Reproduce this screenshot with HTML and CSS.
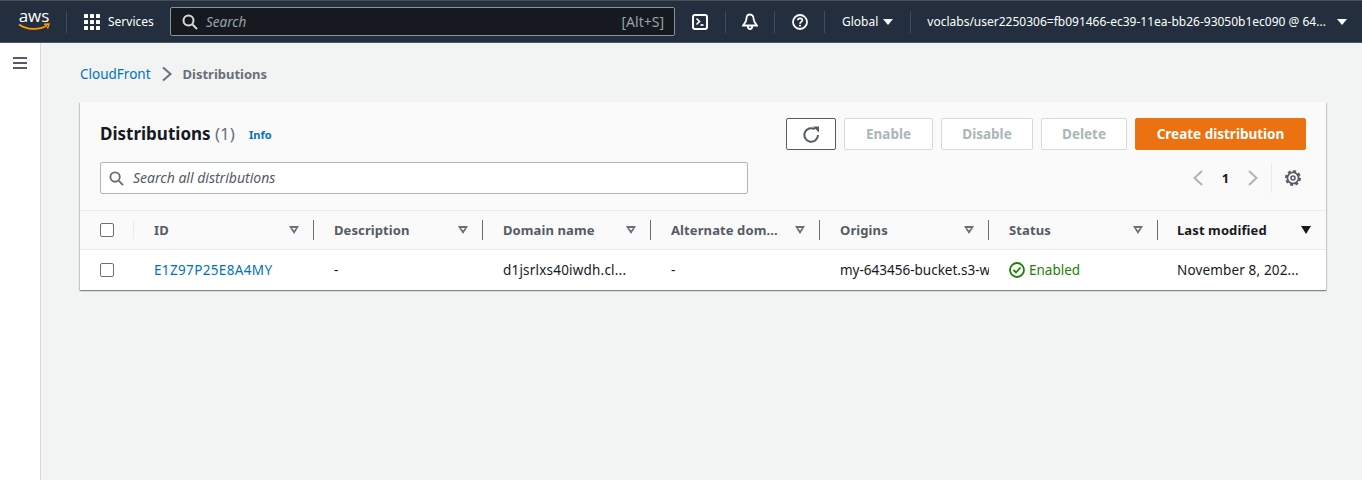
FILE: index.html
```html
<!DOCTYPE html>
<html>
  <head>
    <title>Distributions</title>
    <meta name="viewport" content="width=device-width, initial-scale=1">
    <link rel="stylesheet" href="styles.css">
  </head>
  <body>
    <header class="topbar">
      <a class="logo">
        <span class="logo-text">aws</span>
        <svg class="logo-smile" width="32" height="8" viewBox="0 0 32 8"><path d="M1 1.500C9 7 21 7.500 29 2.500" fill="none" stroke="#f90" stroke-width="1.700"/><path d="M26 1.200L31 1 29.500 5.500" fill="none" stroke="#f90" stroke-width="1.500"/></svg>
      </a>
      <span class="bar-sep logo-sep"></span>
      <svg class="grid-icon" width="16" height="16" viewBox="0 0 16 16" fill="#fff"><rect width="4" height="4" rx=".5"/><rect x="6" width="4" height="4" rx=".5"/><rect x="12" width="4" height="4" rx=".5"/><rect y="6" width="4" height="4" rx=".5"/><rect x="6" y="6" width="4" height="4" rx=".5"/><rect x="12" y="6" width="4" height="4" rx=".5"/><rect y="12" width="4" height="4" rx=".5"/><rect x="6" y="12" width="4" height="4" rx=".5"/><rect x="12" y="12" width="4" height="4" rx=".5"/></svg>
      <span class="services">Services</span>
      <div class="top-search">
        <svg width="16" height="16" viewBox="0 0 16 16" fill="none" stroke="#d5dbdb" stroke-width="2"><circle cx="6.500" cy="6.500" r="5"/><path d="M10.500 10.500L15 15"/></svg>
        <span class="top-search-text">Search</span>
        <span class="shortcut">[Alt+S]</span>
      </div>
      <svg class="bar-icon cloudshell" width="16" height="16" viewBox="0 0 16 16" fill="none" stroke="#fff" stroke-width="2"><rect x="1" y="1" width="14" height="14" rx="2"/><path d="M4.500 4.500L7.500 7.500 4.500 10.500" stroke-width="1.700"/><path d="M8.500 11H11.500" stroke-width="1.700"/></svg>
      <span class="bar-sep"></span>
      <svg class="bar-icon" width="16" height="18" viewBox="0 0 16 18" fill="none" stroke="#fff" stroke-width="1.800"><path d="M8 1.500C5.500 1.500 4.500 3.500 4.500 5.500C4.500 8.500 3 10 1 12.500H15C13 10 11.500 8.500 11.500 5.500C11.500 3.500 10.500 1.500 8 1.500Z"/><path d="M5.800 13C5.800 17 10.200 17 10.200 13"/></svg>
      <span class="bar-sep"></span>
      <svg class="bar-icon help" width="16" height="16" viewBox="0 0 16 16" fill="none" stroke="#fff" stroke-width="1.800"><circle cx="8" cy="8" r="7"/><path d="M5.800 6.200C5.800 3.600 10.300 3.700 10.300 6.200C10.300 7.900 8 7.900 8 9.800" stroke-width="1.700"/><path d="M8 10.800V12.500" stroke-width="1.800"/></svg>
      <span class="bar-sep"></span>
      <span class="region">Global</span>
      <span class="caret-white caret-region"></span>
      <span class="bar-sep"></span>
      <span class="account">voclabs/user2250306=fb091466-ec39-11ea-bb26-93050b1ec090 @ 64...</span>
      <span class="caret-white"></span>
    </header>

    <div class="layout">
      <aside class="sidebar">
        <svg width="14" height="12" viewBox="0 0 14 12" fill="#545b64"><rect width="14" height="2"/><rect y="5" width="14" height="2"/><rect y="10" width="14" height="2"/></svg>
      </aside>
      <main class="content">
        <nav class="crumbs">
          <a class="link">CloudFront</a>
          <svg width="12" height="16" viewBox="0 0 12 16" fill="none" stroke="#687078" stroke-width="2"><path d="M2 1.500L9.500 8 2 14.500"/></svg>
          <span class="crumb-current">Distributions</span>
        </nav>

        <section class="card">
          <div class="card-head">
            <div class="head-row">
              <h1>Distributions <span class="count">(1)</span></h1>
              <a class="info">Info</a>
              <div class="actions">
                <button class="btn btn-refresh">
                  <svg width="17" height="17" viewBox="0 0 17 17" fill="none" stroke="#545b64" stroke-width="2"><path d="M15 9A6.800 6.800 0 1 1 11.800 3.200"/><path d="M10 0.500H16V6.500Z" fill="#545b64" stroke="none"/></svg>
                </button>
                <button class="btn btn-off btn-enable">Enable</button>
                <button class="btn btn-off btn-disable">Disable</button>
                <button class="btn btn-off btn-delete">Delete</button>
                <button class="btn btn-primary">Create distribution</button>
              </div>
            </div>
            <div class="filter-row">
              <div class="filter">
                <svg width="15" height="15" viewBox="0 0 16 16" fill="none" stroke="#687078" stroke-width="2"><circle cx="6.500" cy="6.500" r="5"/><path d="M10.500 10.500L15 15"/></svg>
                <span class="filter-text">Search all distributions</span>
              </div>
              <div class="pager">
                <svg width="12" height="18" viewBox="0 0 12 18" fill="none" stroke="#aab7b8" stroke-width="2"><path d="M10 2L2.500 9 10 16"/></svg>
                <span class="page-num">1</span>
                <svg width="12" height="18" viewBox="0 0 12 18" fill="none" stroke="#aab7b8" stroke-width="2"><path d="M2 2L9.500 9 2 16"/></svg>
                <span class="pager-sep"></span>
                <svg width="16" height="16" viewBox="0 0 16 16" fill="none" stroke="#545b64"><circle cx="8" cy="8" r="2" stroke-width="1.600"/><circle cx="8" cy="8" r="5.600" stroke-width="1.800"/><circle cx="8" cy="8" r="7" stroke-width="2" stroke-dasharray="2.900 2.598"/></svg>
              </div>
            </div>
          </div>

          <div class="row row-head">
            <div class="cell cell-check"><span class="checkbox"></span></div>
            <div class="cell th">ID<i class="sort"></i></div>
            <div class="cell th">Description<i class="sort"></i></div>
            <div class="cell th">Domain name<i class="sort"></i></div>
            <div class="cell th"><span class="clip">Alternate dom...</span><i class="sort"></i></div>
            <div class="cell th">Origins<i class="sort"></i></div>
            <div class="cell th">Status<i class="sort"></i></div>
            <div class="cell th th-active">Last modified<i class="sort-on"></i></div>
          </div>
          <div class="row row-body">
            <div class="cell cell-check cell-plain"><span class="checkbox"></span></div>
            <div class="cell td"><a class="link link-id">E1Z97P25E8A4MY</a></div>
            <div class="cell td">-</div>
            <div class="cell td td-wide">d1jsrlxs40iwdh.cl...</div>
            <div class="cell td">-</div>
            <div class="cell td td-cut">my-643456-bucket.s3-website</div>
            <div class="cell td status">
              <svg width="16" height="16" viewBox="0 0 16 16" fill="none" stroke="#1d8102" stroke-width="1.800"><circle cx="8" cy="8" r="7"/><path d="M4.500 8L7 10.500 11.500 5.500"/></svg>
              Enabled
            </div>
            <div class="cell td td-date">November 8, 202...</div>
          </div>
        </section>
      </main>
    </div>
  </body>
</html>
```

FILE: styles.css
```css
* {
  box-sizing: border-box;
}
body {
  margin: 0;
  height: 480px;
  overflow: hidden;
  background-color: #fff;
  font-family: "Noto Sans", sans-serif;
  font-size: 13.500px;
  color: #16191f;
}
.topbar {
  display: flex;
  align-items: center;
  height: 43px;
  padding: 0 14px 0 18px;
  background-color: #232f3e;
  border-top: 1px solid #4a4f57;
  border-bottom: 1px solid #4a5563;
  color: #fff;
  font-size: 12px;
}
.logo {
  display: flex;
  flex-direction: column;
  align-items: center;
  width: 32px;
}
.logo-text {
  font-family: "Open Sans", sans-serif;
  font-size: 17px;
  line-height: 14px;
  margin-top: -3px;
}
.bar-sep {
  flex: none;
  width: 1px;
  height: 22px;
  margin: 0 16px;
  background-color: #414d5c;
}
.logo-sep {
  margin-right: 0;
}
.grid-icon {
  flex: none;
  margin-left: 17px;
}
.services {
  flex: none;
  margin-left: 8px;
  width: 62px;
}
.top-search {
  display: flex;
  flex: none;
  align-items: center;
  width: 505px;
  height: 29px;
  padding: 0 10px 0 11px;
  background-color: #16191f;
  border: 1px solid #879596;
  border-radius: 2px;
  color: #95a5a6;
}
.top-search-text {
  margin-left: 8px;
  flex: 1;
  font-style: italic;
  font-size: 13.500px;
}
.shortcut {
  font-size: 14px;
}
.bar-icon {
  flex: none;
}
.cloudshell {
  margin: 0 1px 0 17px;
}
.help {
  margin-left: 1px;
}
.region {
  margin-left: 1px;
}
.caret-white {
  flex: none;
  width: 0;
  height: 0;
  margin-left: 5px;
  border-left: 5px solid transparent;
  border-right: 5px solid transparent;
  border-top: 6px solid #fff;
}
.caret-region {
  margin-right: 1px;
}
.account {
  flex: none;
  font-size: 12px;
  margin-right: 6px;
  white-space: nowrap;
}
.layout {
  display: flex;
  height: 437px;
}
.sidebar {
  width: 41px;
  padding: 14px 0 0 13px;
  background-color: #fff;
  border-right: 1px solid #d5dbdb;
}
.sidebar svg {
  display: block;
}
.content {
  flex: 1;
  padding: 22px 36px 0 39px;
  background-color: #f2f3f3;
}
.crumbs {
  display: flex;
  align-items: center;
  gap: 10px;
  height: 18px;
  margin-bottom: 19px;
}
.link {
  color: #0073bb;
}
.link-id {
  letter-spacing: .35px;
}
.crumb-current {
  color: #687078;
  font-weight: 700;
  font-size: 13px;
}
.card {
  background-color: #fff;
  box-shadow: 0 1px 1px 0 rgba(0, 28, 36, .3), 1px 1px 1px 0 rgba(0, 28, 36, .15), -1px 1px 1px 0 rgba(0, 28, 36, .15);
}
.card-head {
  height: 109px;
  padding: 16px 20px 0 20px;
  background-color: #fafafa;
  border-bottom: 1px solid #eaeded;
}
.head-row {
  display: flex;
  align-items: center;
  height: 32px;
}
h1 {
  margin: 0;
  font-size: 17px;
  font-weight: 700;
  line-height: 30px;
}
.count {
  color: #687078;
  font-weight: 400;
}
.info {
  margin-left: 14px;
  color: #0073bb;
  font-size: 11px;
  font-weight: 700;
}
.actions {
  display: flex;
  gap: 8px;
  margin-left: auto;
}
.btn {
  height: 32px;
  border-radius: 2px;
  font-family: "Noto Sans", sans-serif;
  font-size: 13.500px;
  font-weight: 700;
  background-color: #fff;
  padding: 0;
}
.btn-refresh {
  display: flex;
  align-items: center;
  justify-content: center;
  width: 50px;
  background-color: #fff;
  border: 1px solid #545b64;
}
.btn-off {
  border: 1px solid #d5dbdb;
  color: #aab7b8;
}
.btn-enable {
  width: 89px;
}
.btn-disable {
  width: 92px;
}
.btn-delete {
  width: 86px;
}
.btn-primary {
  width: 171px;
  border: 1px solid #ec7211;
  background-color: #ec7211;
  color: #fff;
}
.filter-row {
  display: flex;
  align-items: center;
  justify-content: space-between;
  margin-top: 12px;
}
.filter {
  display: flex;
  align-items: center;
  gap: 9px;
  width: 648px;
  height: 32px;
  padding: 0 8px;
  background-color: #fff;
  border: 1px solid #aab7b8;
  border-radius: 2px;
  color: #545b64;
  font-style: italic;
  font-size: 14px;
}
.filter-text {
  line-height: 18px;
  margin-bottom: 1px;
}
.pager {
  display: flex;
  align-items: center;
  height: 32px;
  margin-right: 5px;
}
.page-num {
  width: 43px;
  text-align: center;
  font-weight: 700;
  font-size: 13px;
}
.pager-sep {
  width: 1px;
  height: 30px;
  margin: 0 13px 0 12px;
  background-color: #eaeded;
}
.row {
  display: grid;
  grid-template-columns: 54px 180px 169px 168px 169px 169px 169px 168px;
}
.row-head {
  height: 39px;
  background-color: #fafafa;
  border-bottom: 1px solid #eaeded;
}
.row-body {
  height: 40px;
  background-color: #fff;
}
.cell {
  display: flex;
  align-items: center;
  min-width: 0;
}
.cell-check {
  padding-left: 20px;
}
.row-head .cell-check {
  border-right: 1px solid #eaeded;
  margin: 10px 0;
}
.checkbox {
  width: 14px;
  height: 14px;
  background-color: #fff;
  border: 1px solid #687078;
  border-radius: 2px;
}
.th {
  position: relative;
  margin: 9px 0;
  padding: 0 20px;
  color: #545b64;
  font-weight: 700;
  font-size: 13px;
  letter-spacing: .1px;
  border-right: 1px solid #687078;
  white-space: nowrap;
}
.th-active {
  border-right: 0;
  color: #16191f;
  padding-right: 0;
  padding-left: 19px;
}
.clip {
  overflow: hidden;
}
.sort,
.sort-on {
  position: absolute;
  top: 6px;
  width: 0;
  height: 0;
}
.sort {
  right: 14px;
  width: 10px;
  height: 8px;
  background-color: #687078;
  clip-path: polygon(0 0, 100% 0, 50% 100%, 0 0, 3px 2px, 5px 4.500px, 7px 2px, 3px 2px);
}
.sort-on {
  right: 15px;
  border-left: 5px solid transparent;
  border-right: 5px solid transparent;
  border-top: 8px solid #16191f;
}
.td {
  padding: 0 0 0 20px;
  overflow: hidden;
  white-space: nowrap;
}
.td-wide {
  letter-spacing: .2px;
}
.td-date {
  padding-left: 19px;
  letter-spacing: .15px;
}
.status {
  gap: 4px;
  color: #1d8102;
}
```
